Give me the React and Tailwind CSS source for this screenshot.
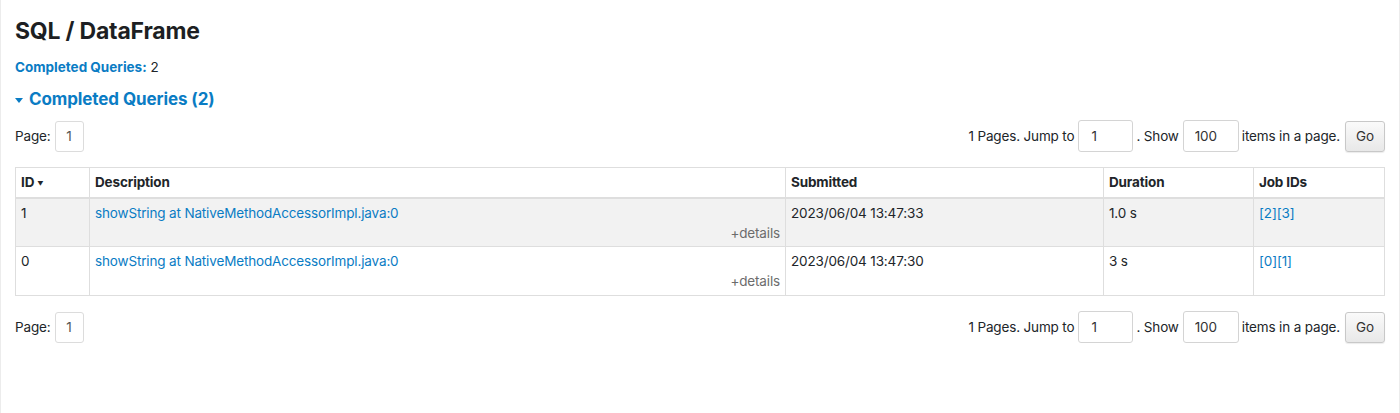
import React from "react";

const queries = [
    { id: 1, desc: "showString at NativeMethodAccessorImpl.java:0", submitted: "2023/06/04 13:47:33", duration: "1.0 s", jobs: [2, 3] },
    { id: 0, desc: "showString at NativeMethodAccessorImpl.java:0", submitted: "2023/06/04 13:47:30", duration: "3 s", jobs: [0, 1] },
];

const Pagination = () => (
    <div className="flex items-center justify-between h-[32px]">
        <div className="flex items-center gap-[4px]">
            <span className="text-[#212529]">Page:</span>
            <span className="w-[29px] h-[31px] flex items-center justify-center border border-[#dcdcdc] rounded-[3px] text-[#555]">1</span>
        </div>
        <div className="flex items-center text-[#212529]">
            <span>1 Pages. Jump to</span>
            <input
                className="ml-[4px] w-[55px] h-[32px] border border-[#d4d4d4] rounded-[3px] px-[12px] text-[#333] outline-none"
                defaultValue="1"
            />
            <span className="ml-[3px]">. Show</span>
            <input
                className="ml-[4px] w-[56px] h-[32px] border border-[#d4d4d4] rounded-[3px] px-[11px] text-[#333] outline-none"
                defaultValue="100"
            />
            <span className="ml-[3px]">items in a page.</span>
            <button className="ml-[5px] w-[40px] h-[31px] border border-[#c8c8c8] rounded-[3px] bg-gradient-to-b from-[#fafafa] to-[#e8e8e8] text-[#333] shadow-[0_1px_1px_rgba(0,0,0,0.08)]">
                Go
            </button>
        </div>
    </div>
);

export default function App() {
    return (
        <div
            className="min-h-[413px] bg-white pl-[14px] pr-[14px] pt-[17px] border-x border-[#ececec] text-[13.5px] tracking-[-0.15px]"
            style={{ fontFamily: "Inter, 'Liberation Sans', sans-serif" }}
        >
            <h3 className="text-[23px] leading-[28px] font-bold text-[#1d1f23] tracking-[-0.2px]">SQL / DataFrame</h3>

            <div className="mt-[12px] leading-[20px] text-[#212529] tracking-normal">
                <span className="font-bold text-[#0a7cc4]">Completed Queries:</span> 2
            </div>

            <div className="mt-[11px] flex items-center gap-[6px] h-[24px] text-[#0a7cc4]">
                <svg width="8" height="5" viewBox="0 0 8 5" className="mt-[1px]">
                    <path d="M0 0 L8 0 L4 5 Z" fill="#0a7cc4" />
                </svg>
                <span className="text-[17px] font-bold tracking-[-0.1px]">Completed Queries (2)</span>
            </div>

            <div className="mt-[8px]">
                <Pagination />
            </div>

            <table className="mt-[15px] w-full border-collapse border border-[#dedede] text-[#212529]">
                <thead>
                    <tr className="h-[30px] border-b-2 border-[#dedede]">
                        <th className="w-[74px] text-left font-bold px-[5px] border-r border-[#dedede]">
                            ID <span className="text-[6px] align-middle">▼</span>
                        </th>
                        <th className="w-[696px] text-left font-bold px-[5px] border-r border-[#dedede]">Description</th>
                        <th className="w-[318px] text-left font-bold px-[5px] border-r border-[#dedede]">Submitted</th>
                        <th className="w-[150px] text-left font-bold px-[5px] border-r border-[#dedede]">Duration</th>
                        <th className="text-left font-bold px-[5px]">Job IDs</th>
                    </tr>
                </thead>
                <tbody>
                    {queries.map((q, i) => (
                        <tr key={q.id} className={`h-[49px] border-b border-[#dedede] ${i === 0 ? "bg-[#f2f2f2]" : "bg-white"}`}>
                            <td className="align-top px-[5px] pt-[4px] leading-[20px] border-r border-[#dedede]">{q.id}</td>
                            <td className="align-top px-[5px] pt-[4px] leading-[20px] border-r border-[#dedede]">
                                <div className="text-[#0a7cc4]">{q.desc}</div>
                                <div className="text-right text-[#6c6c6c]">+details</div>
                            </td>
                            <td className="align-top px-[5px] pt-[4px] leading-[20px] border-r border-[#dedede]">{q.submitted}</td>
                            <td className="align-top px-[5px] pt-[4px] leading-[20px] border-r border-[#dedede]">{q.duration}</td>
                            <td className="align-top px-[5px] pt-[4px] leading-[20px] text-[#0a7cc4]">
                                {q.jobs.map((j) => (
                                    <span key={j}>[{j}]</span>
                                ))}
                            </td>
                        </tr>
                    ))}
                </tbody>
            </table>

            <div className="mt-[15px]">
                <Pagination />
            </div>
        </div>
    );
}
